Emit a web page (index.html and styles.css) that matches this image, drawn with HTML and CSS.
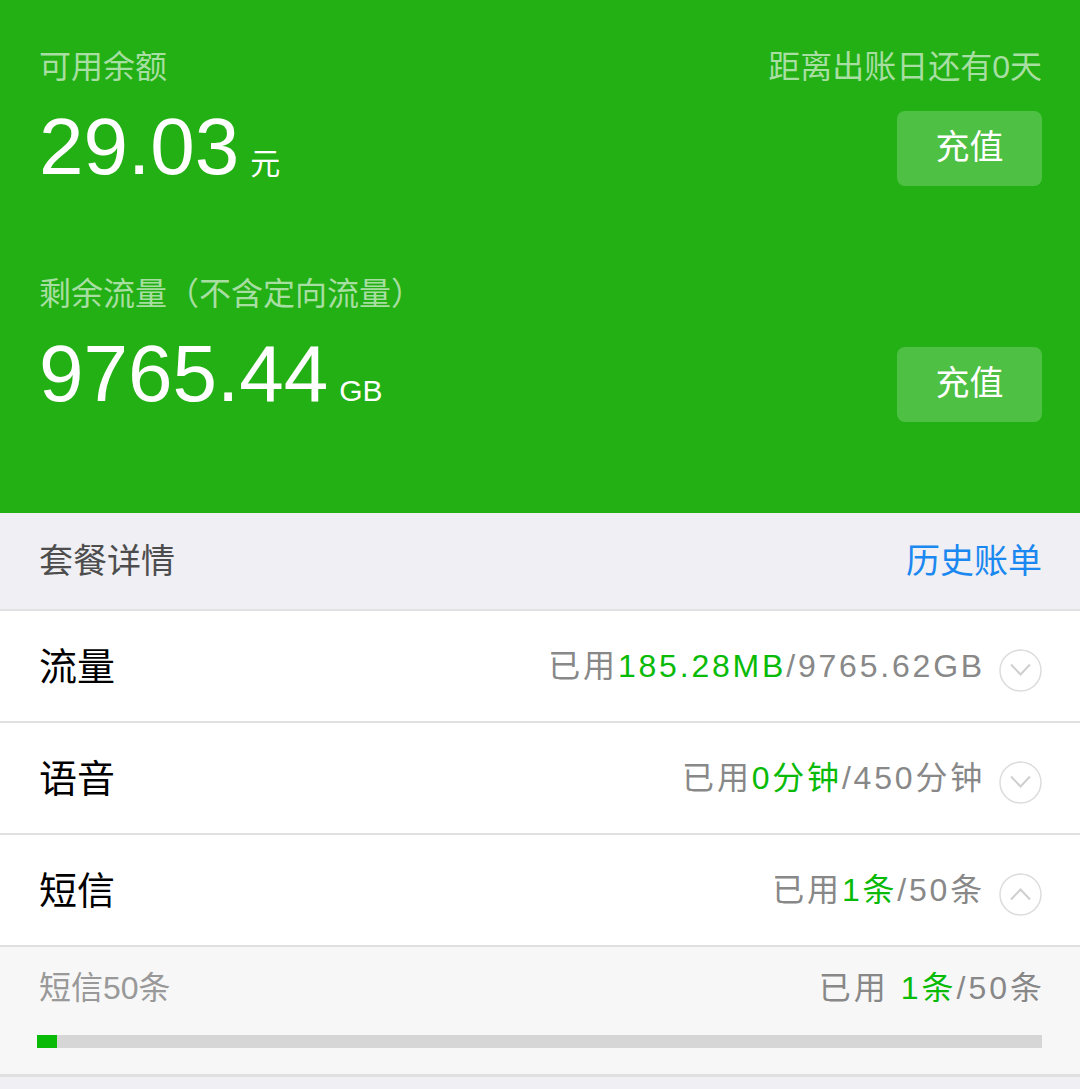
FILE: index.html
```html
<!DOCTYPE html>
<html lang="zh-CN">
<head>
    <meta charset="utf-8">
    <title>话费流量查询</title>
    <link rel="stylesheet" href="styles.css">
</head>
<body>

    <div class="top">
        <div class="block">
            <div class="label-row">
                <span>可用余额</span>
                <span>距离出账日还有0天</span>
            </div>
            <div class="amount-row">
                <div class="amount">29.03<span class="unit">元</span></div>
                <a class="btn">充值</a>
            </div>
        </div>
        <div class="block">
            <div class="label-row">
                <span>剩余流量（不含定向流量）</span>
            </div>
            <div class="amount-row">
                <div class="amount">9765.44<span class="unit">GB</span></div>
                <a class="btn btn-low">充值</a>
            </div>
        </div>
    </div>

    <div class="section-head">
        <span class="section-title">套餐详情</span>
        <a class="section-link">历史账单</a>
    </div>

    <div class="item">
        <span class="item-name">流量</span>
        <span class="item-use">已用<em>185.28MB</em>/9765.62GB</span>
        <svg class="arrow" width="43" height="43" viewBox="0 0 43 43">
            <circle cx="21.5" cy="21.5" r="20.5" fill="none" stroke="#dcdcdc" stroke-width="1.5"/>
            <polyline points="12,15.5 21.5,25.5 31,15.5" fill="none" stroke="#cfcfcf" stroke-width="2"/>
        </svg>
    </div>
    <div class="item">
        <span class="item-name">语音</span>
        <span class="item-use">已用<em>0分钟</em>/450分钟</span>
        <svg class="arrow" width="43" height="43" viewBox="0 0 43 43">
            <circle cx="21.5" cy="21.5" r="20.5" fill="none" stroke="#dcdcdc" stroke-width="1.5"/>
            <polyline points="12,15.5 21.5,25.5 31,15.5" fill="none" stroke="#cfcfcf" stroke-width="2"/>
        </svg>
    </div>
    <div class="item">
        <span class="item-name">短信</span>
        <span class="item-use">已用<em>1条</em>/50条</span>
        <svg class="arrow" width="43" height="43" viewBox="0 0 43 43">
            <circle cx="21.5" cy="21.5" r="20.5" fill="none" stroke="#dcdcdc" stroke-width="1.5"/>
            <polyline points="12,26.5 21.5,16.5 31,26.5" fill="none" stroke="#cfcfcf" stroke-width="2"/>
        </svg>
    </div>

    <div class="detail">
        <div class="detail-row">
            <span class="detail-name">短信50条</span>
            <span class="detail-use">已用 <em>1条</em>/50条</span>
        </div>
        <div class="bar">
            <div class="bar-fill" style="width: 2%"></div>
        </div>
    </div>

</body>
</html>
```

FILE: styles.css
```css
*
{
	margin: 0;
	padding: 0;
}
body
{
	background: #efeff4;
	font-family: "Liberation Sans", "Noto Sans CJK SC", sans-serif;
}
em
{
	font-style: normal;
	color: #09bb07;
}

/* green summary */
.top
{
	background: #22b014;
	padding: 49px 38px 99px 39px;
}
.block + .block
{
	margin-top: 89px;
}
.label-row
{
	display: flex;
	justify-content: space-between;
	height: 36px;
	font-size: 32px;
	line-height: 36px;
	color: #a7dea1;
}
.amount-row
{
	display: flex;
	justify-content: space-between;
	align-items: flex-start;
	height: 80px;
	margin-top: 22px;
}
.amount
{
	font-size: 80px;
	line-height: 80px;
	color: #fff;
}
.unit
{
	font-size: 30px;
	margin-left: 11px;
}
.btn
{
	display: block;
	width: 145px;
	height: 75px;
	margin-top: 4px;
	border-radius: 8px;
	background: #4ec043;
	color: #fff;
	font-size: 34px;
	line-height: 73px;
	text-align: center;
}
.btn-low
{
	margin-top: 13px;
}

/* package list */
.section-head
{
	display: flex;
	justify-content: space-between;
	align-items: center;
	height: 90px;
	padding: 0 38px 6px 39px;
	border-bottom: 2px solid #e0e0e0;
	font-size: 34px;
}
.section-title
{
	color: #4d4d4d;
}
.section-link
{
	color: #1a88f0;
}
.item
{
	display: flex;
	align-items: center;
	height: 104px;
	padding: 0 38px 6px 39px;
	background: #fff;
	border-bottom: 2px solid #e0e0e0;
}
.item-name
{
	flex: 1;
	font-size: 38px;
	color: #000;
}
.item-use
{
	font-size: 32px;
	letter-spacing: 2.8px;
	color: #888;
	margin-right: 14px;
}
.arrow
{
	display: block;
	margin-top: 14px;
}

.detail
{
	background: #f7f7f7;
	padding: 21px 38px 26px 37px;
	border-bottom: 3px solid #e0e0e0;
}
.detail-row
{
	display: flex;
	justify-content: space-between;
	font-size: 32px;
	line-height: 40px;
	padding-left: 2px;
}
.detail-name
{
	color: #999;
}
.detail-use
{
	color: #888;
	letter-spacing: 3px;
	margin-right: -3px;
}
.bar
{
	height: 13px;
	margin-top: 27px;
	background: #d6d6d6;
}
.bar-fill
{
	height: 100%;
	background: #09bb07;
}
```
